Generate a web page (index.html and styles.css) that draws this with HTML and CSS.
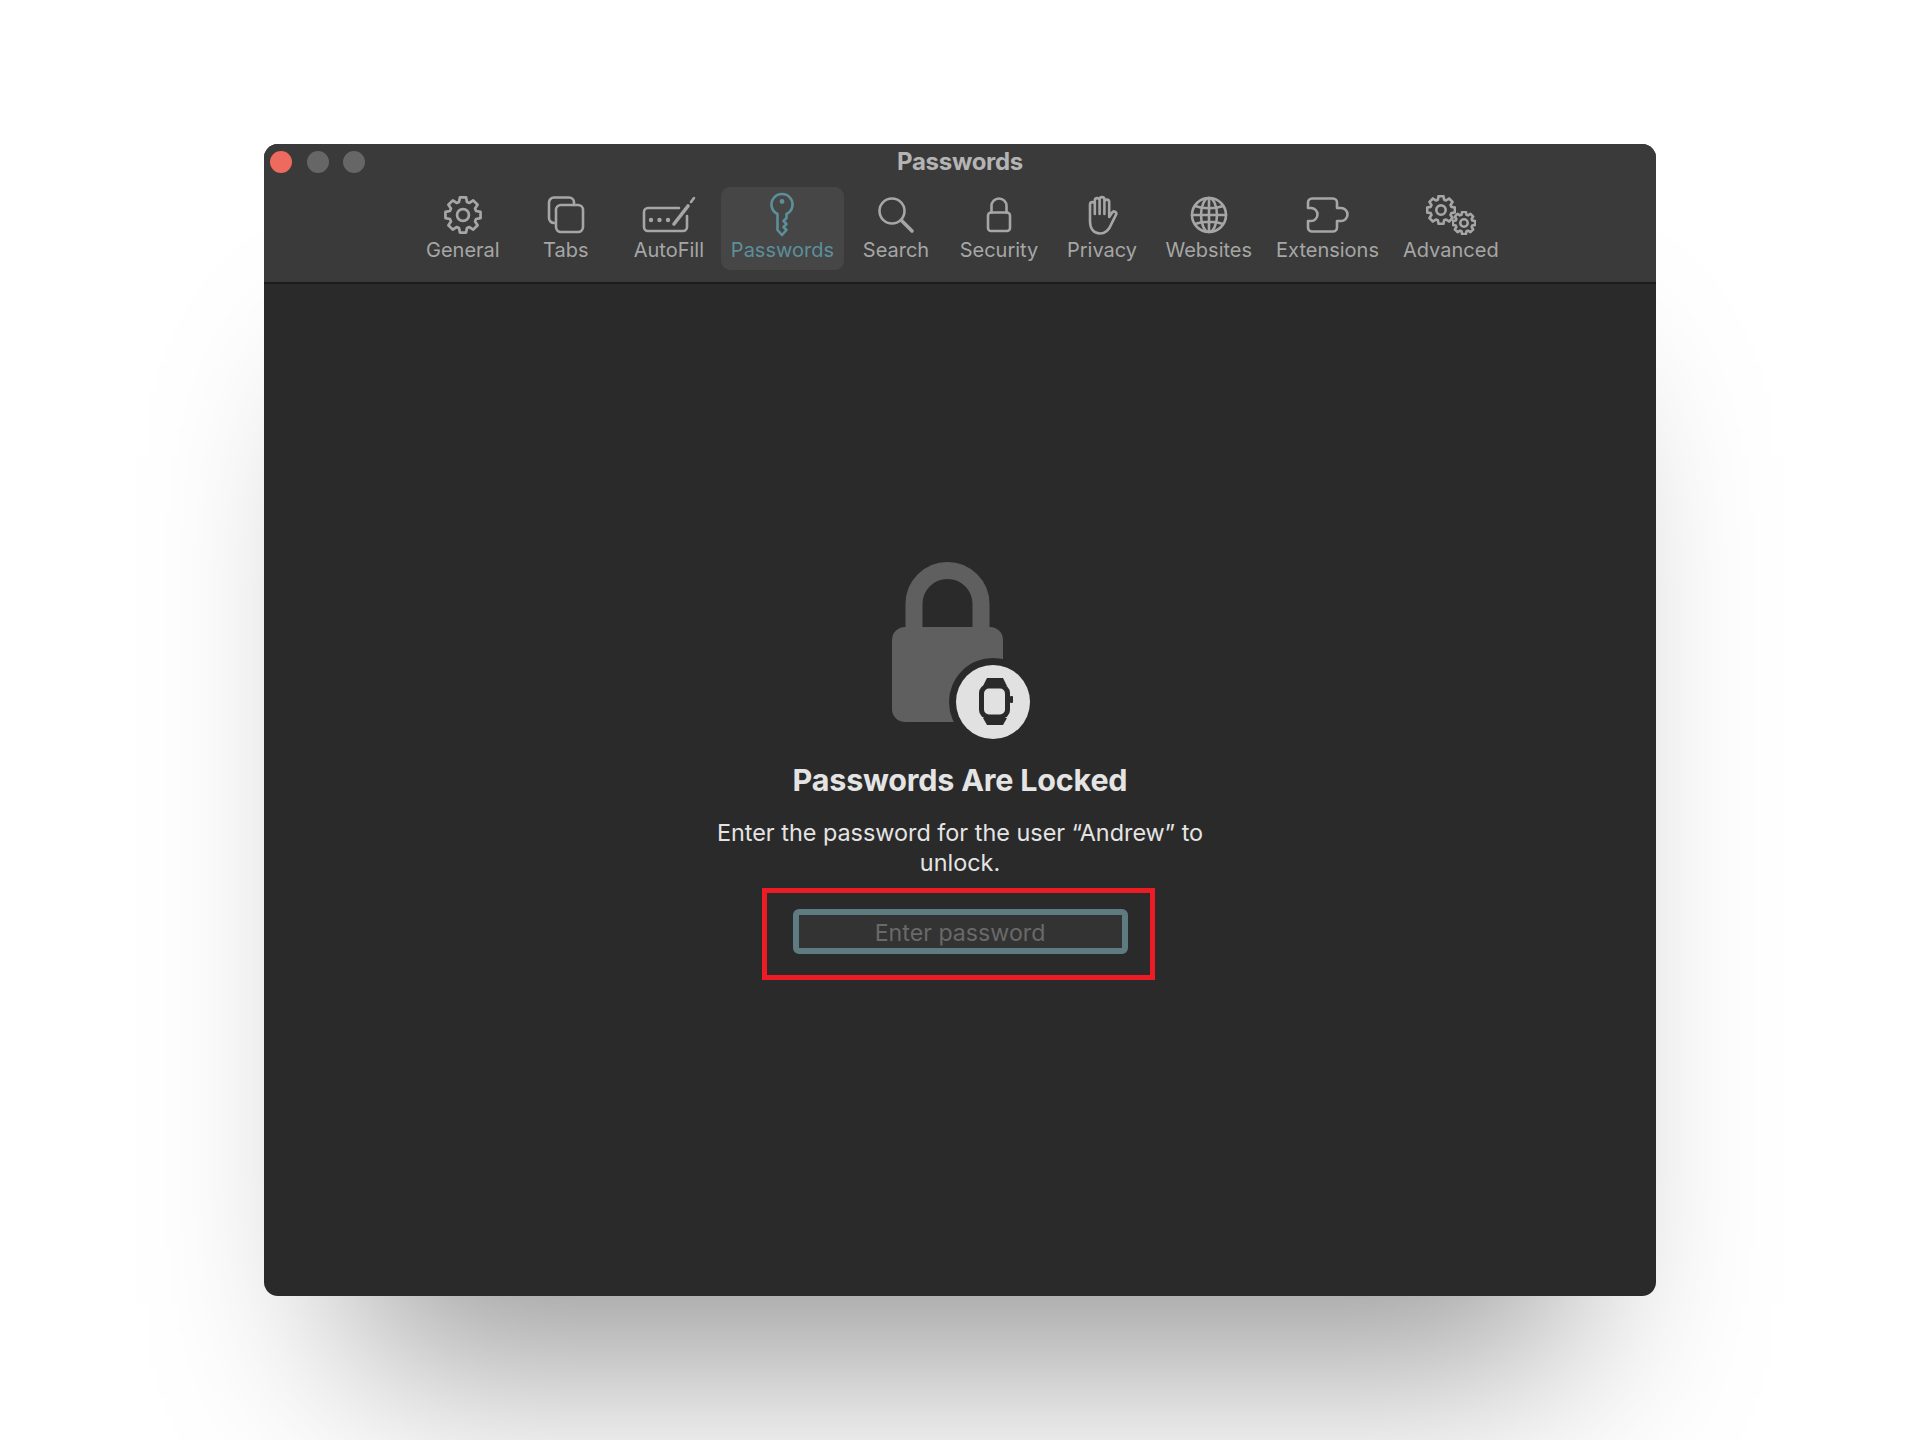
FILE: index.html
```html
<!DOCTYPE html>
<html lang="en">
<head>
  <meta charset="UTF-8" />
  <title>Passwords</title>
  <link rel="stylesheet" href="styles.css">
</head>
<body>

  <svg class="defs" width="0" height="0">
    <symbol id="gear" viewBox="0 0 32 32">
      <polygon points="18.6,1.23 19.36,5 21.4,5.85 24.6,3.71 28.29,7.4 26.15,10.6 27,12.64 30.77,13.4 30.77,18.6 27,19.36 26.15,21.4 28.29,24.6 24.6,28.29 21.4,26.15 19.36,27 18.6,30.77 13.4,30.77 12.64,27 10.6,26.15 7.4,28.29 3.71,24.6 5.85,21.4 5,19.36 1.23,18.6 1.23,13.4 5,12.64 5.85,10.6 3.71,7.4 7.4,3.71 10.6,5.85 12.64,5 13.4,1.23" />
      <circle cx="16" cy="16" r="5" />
    </symbol>
  </svg>

  <div class="window">

    <!-- Title bar -->
    <div class="titlebar">
      <div class="lights">
        <span class="light light-close"></span>
        <span class="light"></span>
        <span class="light"></span>
      </div>
      <div class="title">Passwords</div>
    </div>

    <!-- Toolbar -->
    <nav class="toolbar">
      <div class="tool">
        <div class="tool-icon">
          <svg class="gear-one" width="38" height="38"><use href="#gear" /></svg>
        </div>
        <span>General</span>
      </div>
      <div class="tool">
        <div class="tool-icon">
          <svg width="38" height="38" viewBox="0 0 38 38">
            <path d="M8.5 27 H7 a5 5 0 0 1 -5 -5 V6.5 a5 5 0 0 1 5 -5 H22 a5 5 0 0 1 5 5 V9" />
            <rect x="9" y="9" width="27" height="27" rx="5" />
          </svg>
        </div>
        <span>Tabs</span>
      </div>
      <div class="tool">
        <div class="tool-icon">
          <svg width="54" height="36" viewBox="0 0 54 36">
            <path d="M37 11 H6 a4 4 0 0 0 -4 4 V30 a4 4 0 0 0 4 4 H41 a4 4 0 0 0 4 -4 V19" />
            <path class="thick" d="M32 27 L46 9" />
            <path d="M49 5 L52 1" />
            <circle class="solid" cx="9" cy="23" r="2.2" />
            <circle class="solid" cx="17.5" cy="23" r="2.2" />
            <circle class="solid" cx="26" cy="23" r="2.2" />
          </svg>
        </div>
        <span>AutoFill</span>
      </div>
      <div class="tool tool-active">
        <div class="tool-icon">
          <svg width="26" height="44" viewBox="0 0 26 44">
            <path d="M8.5 21 A10.5 10.5 0 1 1 17.5 21 V25 l-3 3 l3 3 l-3 3 l3 3 l-4.5 5 l-4.5 -5 Z" />
            <circle class="solid" cx="13" cy="8.5" r="2.4" />
          </svg>
        </div>
        <span>Passwords</span>
      </div>
      <div class="tool">
        <div class="tool-icon">
          <svg width="36" height="36" viewBox="0 0 36 36">
            <circle cx="14" cy="14" r="12.5" />
            <path class="thick" d="M23.5 23.5 L34 34" />
          </svg>
        </div>
        <span>Search</span>
      </div>
      <div class="tool">
        <div class="tool-icon">
          <svg width="26" height="36" viewBox="0 0 26 36">
            <path d="M5.5 15.5 V9 a7.5 7.5 0 0 1 15 0 V15.5" />
            <rect x="2" y="15.5" width="22" height="18.5" rx="3" />
          </svg>
        </div>
        <span>Security</span>
      </div>
      <div class="tool">
        <div class="tool-icon">
          <svg width="34" height="40" viewBox="0 0 34 40">
            <path d="M5 26 V9.5 a2.4 2.4 0 0 1 4.8 0 V19 V5.5 a2.4 2.4 0 0 1 4.8 0 V19 V4.5 a2.4 2.4 0 0 1 4.8 0 V19 V7 a2.4 2.4 0 0 1 4.8 0 V22 l3 -4.5 a2.2 2.2 0 0 1 3.7 2.4 l-4.5 9 C24 35 20 38.5 15 38.5 C9 38.5 5 34 5 26 Z" />
          </svg>
        </div>
        <span>Privacy</span>
      </div>
      <div class="tool">
        <div class="tool-icon">
          <svg width="38" height="38" viewBox="0 0 38 38">
            <circle cx="19" cy="19" r="17" />
            <ellipse cx="19" cy="19" rx="8" ry="17" />
            <path d="M19 2 V36 M2 19 H36 M5 10 C13 13 25 13 33 10 M5 28 C13 25 25 25 33 28" />
          </svg>
        </div>
        <span>Websites</span>
      </div>
      <div class="tool">
        <div class="tool-icon">
          <svg width="44" height="36" viewBox="0 0 44 36">
            <path d="M6 1.5 H27 a4 4 0 0 1 4 4 V11 h4 a6.5 6.5 0 0 1 0 13 h-4 V30.5 a4 4 0 0 1 -4 4 H6 a4 4 0 0 1 -4 -4 V24 h3 a6.5 6.5 0 0 0 0 -13 H2 V5.5 a4 4 0 0 1 4 -4 Z" />
          </svg>
        </div>
        <span>Extensions</span>
      </div>
      <div class="tool">
        <div class="tool-icon">
          <svg width="50" height="40" viewBox="0 0 50 40">
            <svg class="gear-big" x="0" y="0" width="30" height="30"><use href="#gear" /></svg>
            <svg class="gear-small" x="26" y="16" width="24" height="24"><use href="#gear" /></svg>
          </svg>
        </div>
        <span>Advanced</span>
      </div>
    </nav>

    <!-- Locked Section -->
    <main class="locked">
      <svg class="lock" width="160" height="180" viewBox="0 0 160 180">
        <path class="lock-shackle" d="M34 72 V44 a33.5 33.5 0 0 1 67 0 V72" />
        <rect class="lock-body" x="12" y="67" width="111" height="95" rx="13" />
        <circle class="lock-cut" cx="113" cy="142" r="44" />
        <circle class="lock-badge" cx="113" cy="142" r="37" />
        <polygon class="lock-watch" points="103,126 107,118 123,118 127,126" />
        <polygon class="lock-watch" points="103,158 107,165 123,165 127,158" />
        <rect class="lock-watch" x="99" y="124" width="31" height="35" rx="9" />
        <rect class="lock-badge" x="104" y="128.5" width="21" height="26" rx="5" />
        <rect class="lock-watch" x="130" y="136" width="3" height="7" rx="1" />
      </svg>
      <h2>Passwords Are Locked</h2>
      <p>Enter the password for the user “Andrew” to unlock.</p>
      <div class="highlight">
        <input type="password" class="password-field" placeholder="Enter password" />
      </div>
    </main>

  </div>

</body>
</html>
```

FILE: styles.css
```css
/* Reset & Base */
* {
  margin: 0;
  padding: 0;
  box-sizing: border-box;
}
html, body {
  height: 100%;
  font-family: 'Inter', 'Liberation Sans', sans-serif;
  background: #fff;
  overflow: hidden;
}
.defs {
  display: block;
  height: 0;
}

/* Window */
.window {
  width: 1392px;
  height: 1152px;
  margin: 144px 0 0 264px;
  display: flex;
  flex-direction: column;
  background: #2a2a2a;
  border-radius: 14px;
  overflow: hidden;
  box-shadow: 0 160px 180px -90px rgba(0, 0, 0, 0.4);
}

/* Title Bar */
.titlebar {
  height: 43px;
  flex: none;
  display: flex;
  align-items: flex-start;
  justify-content: center;
  padding-top: 5px;
  position: relative;
  background: #3a3a3a;
}
.lights {
  position: absolute;
  left: 6px;
  top: 7px;
  display: flex;
  gap: 14.5px;
}
.light {
  width: 22px;
  height: 22px;
  border-radius: 50%;
  background: #666;
}
.light-close {
  background: #ee6a5f;
}
.title {
  font-size: 24px;
  font-weight: 700;
  line-height: 26px;
  color: #b4b4b4;
  letter-spacing: -0.3px;
}

/* Toolbar */
.toolbar {
  height: 97px;
  flex: none;
  display: flex;
  justify-content: center;
  align-items: flex-start;
  gap: 1px;
  padding-left: 2px;
  background: #3a3a3a;
  border-bottom: 2px solid #1b1b1b;
}
.tool {
  min-width: 102px;
  height: 83px;
  padding: 7px 11.5px;
  display: flex;
  flex-direction: column;
  align-items: center;
  border-radius: 9px;
  font-size: 20px;
  line-height: 24px;
  color: #a6a6a6;
}
.tool span {
  margin-top: 2px;
}
.tool-icon {
  height: 42px;
  display: flex;
  align-items: center;
  justify-content: center;
}
.tool-icon svg {
  fill: none;
  stroke: currentColor;
  stroke-width: 2.6;
  stroke-linejoin: round;
  stroke-linecap: round;
  overflow: visible;
}
.tool-icon .solid {
  fill: currentColor;
  stroke: none;
}
.tool-icon .thick {
  stroke-width: 3.6;
}
.tool-icon .gear-one {
  stroke-width: 2.3;
}
.tool-icon .gear-big {
  stroke-width: 2.8;
}
.tool-icon .gear-small {
  stroke-width: 3.4;
}
.tool-active {
  padding: 7px 10px;
  background: #464646;
  color: #5c8f99;
}

/* Locked Section */
.locked {
  flex: 1;
  display: flex;
  flex-direction: column;
  align-items: center;
  padding-top: 276px;
}
.lock {
  display: block;
}
.lock-shackle {
  fill: none;
  stroke: #5f5f5f;
  stroke-width: 17;
}
.lock-body {
  fill: #5f5f5f;
}
.lock-cut,
.lock-watch {
  fill: #2a2a2a;
}
.lock-badge {
  fill: #e1e1e1;
}
.locked h2 {
  margin-top: 22px;
  font-size: 30.5px;
  line-height: 36px;
  font-weight: 700;
  color: #e4e4e4;
  letter-spacing: -0.2px;
}
.locked p {
  width: 500px;
  margin-top: 20px;
  font-size: 23.4px;
  line-height: 29.5px;
  text-align: center;
  color: #e4e4e4;
}

/* Password Field */
.highlight {
  width: 393px;
  height: 92px;
  margin: 11px 3px 0 0;
  padding: 16px 0 0 3px;
  display: flex;
  align-items: flex-start;
  justify-content: center;
  border: 5px solid #ed1c24;
}
.password-field {
  width: 335px;
  height: 45px;
  padding-top: 2px;
  background: #333;
  border: 6px solid #5f7b82;
  border-radius: 6px;
  outline: none;
  font-family: inherit;
  font-size: 23.2px;
  text-align: center;
  color: #fff;
}
.password-field::placeholder {
  color: #696969;
  opacity: 1;
}
```
